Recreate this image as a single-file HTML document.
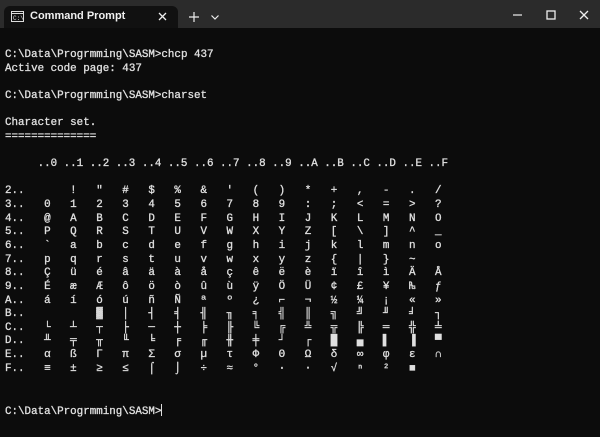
<!DOCTYPE html>
<html><head><meta charset="utf-8"><style>
html,body{margin:0;padding:0;width:600px;height:437px;overflow:hidden;background:#0c0c0c;}
.tb{position:absolute;left:0;top:0;width:600px;height:28px;background:#2b2b2b;}
.tab{position:absolute;left:4px;top:6px;width:174px;height:22px;background:#111111;border-radius:6px 6px 0 0;}
.tt{position:absolute;left:30px;top:10px;font:bold 11px "Liberation Sans",sans-serif;color:#f0f0f0;}
.term{position:absolute;left:5px;top:49px;font-family:"Liberation Mono","DejaVu Sans Mono",monospace;font-size:10.87px;line-height:13.65px;color:#e0e0e0;-webkit-text-stroke:0.3px #e0e0e0;}
.l{height:13.65px;white-space:pre;overflow:visible;}
.c{display:inline-block;width:26.07px;text-align:left;}
.lab{display:inline-block;width:39.1px;}
.cur{display:inline-block;width:1px;height:12px;background:#ddd;vertical-align:-2px;}
</style></head><body>
<div class="tb"></div>
<div class="tab"></div>
<svg style="position:absolute;left:11px;top:11px" width="13" height="11" viewBox="0 0 13 11"><rect x="0.5" y="0.5" width="12" height="10" fill="none" stroke="#ddd"/><line x1="0.5" y1="2.5" x2="12.5" y2="2.5" stroke="#ddd"/><text x="2" y="9" font-size="6" fill="#ddd" font-family="Liberation Mono">C:\</text></svg>
<div class="tt">Command Prompt</div>
<svg style="position:absolute;left:158px;top:12px" width="9" height="9"><path d="M1 1L8 8M8 1L1 8" stroke="#eee" stroke-width="1.3"/></svg>
<svg style="position:absolute;left:189px;top:12px" width="10" height="10"><path d="M5 0V10M0 5H10" stroke="#eee" stroke-width="1.2"/></svg>
<svg style="position:absolute;left:211px;top:15px" width="8" height="5"><path d="M0.5 0.5L4 4L7.5 0.5" stroke="#eee" fill="none" stroke-width="1.2"/></svg>
<svg style="position:absolute;left:513px;top:14px" width="9" height="2"><path d="M0 1H9" stroke="#eee" stroke-width="1.2"/></svg>
<svg style="position:absolute;left:546px;top:10px" width="10" height="10"><rect x="1" y="1" width="8" height="8" fill="none" stroke="#eee" stroke-width="1.3"/></svg>
<svg style="position:absolute;left:579px;top:10px" width="10" height="10"><path d="M1 1L9 9M9 1L1 9" stroke="#eee" stroke-width="1.3"/></svg>
<div class="term"><div class="l">C:\Data\Progrmming\SASM&gt;chcp 437</div><div class="l">Active code page: 437</div><div class="l"> </div><div class="l">C:\Data\Progrmming\SASM&gt;charset</div><div class="l"> </div><div class="l">Character set.</div><div class="l">==============</div><div class="l"> </div><div class="l"><span class="lab">     </span><span class="c" style="margin-left:-6.52px">..0</span><span class="c">..1</span><span class="c">..2</span><span class="c">..3</span><span class="c">..4</span><span class="c">..5</span><span class="c">..6</span><span class="c">..7</span><span class="c">..8</span><span class="c">..9</span><span class="c">..A</span><span class="c">..B</span><span class="c">..C</span><span class="c">..D</span><span class="c">..E</span><span class="c">..F</span></div><div class="l"> </div><div class="l"><span class="lab">2..</span><span class="c"> </span><span class="c">!</span><span class="c">"</span><span class="c">#</span><span class="c">$</span><span class="c">%</span><span class="c">&amp;</span><span class="c">'</span><span class="c">(</span><span class="c">)</span><span class="c">*</span><span class="c">+</span><span class="c">,</span><span class="c">-</span><span class="c">.</span><span class="c">/</span></div><div class="l"><span class="lab">3..</span><span class="c">0</span><span class="c">1</span><span class="c">2</span><span class="c">3</span><span class="c">4</span><span class="c">5</span><span class="c">6</span><span class="c">7</span><span class="c">8</span><span class="c">9</span><span class="c">:</span><span class="c">;</span><span class="c">&lt;</span><span class="c">=</span><span class="c">&gt;</span><span class="c">?</span></div><div class="l"><span class="lab">4..</span><span class="c">@</span><span class="c">A</span><span class="c">B</span><span class="c">C</span><span class="c">D</span><span class="c">E</span><span class="c">F</span><span class="c">G</span><span class="c">H</span><span class="c">I</span><span class="c">J</span><span class="c">K</span><span class="c">L</span><span class="c">M</span><span class="c">N</span><span class="c">O</span></div><div class="l"><span class="lab">5..</span><span class="c">P</span><span class="c">Q</span><span class="c">R</span><span class="c">S</span><span class="c">T</span><span class="c">U</span><span class="c">V</span><span class="c">W</span><span class="c">X</span><span class="c">Y</span><span class="c">Z</span><span class="c">[</span><span class="c">\</span><span class="c">]</span><span class="c">^</span><span class="c">_</span></div><div class="l"><span class="lab">6..</span><span class="c">`</span><span class="c">a</span><span class="c">b</span><span class="c">c</span><span class="c">d</span><span class="c">e</span><span class="c">f</span><span class="c">g</span><span class="c">h</span><span class="c">i</span><span class="c">j</span><span class="c">k</span><span class="c">l</span><span class="c">m</span><span class="c">n</span><span class="c">o</span></div><div class="l"><span class="lab">7..</span><span class="c">p</span><span class="c">q</span><span class="c">r</span><span class="c">s</span><span class="c">t</span><span class="c">u</span><span class="c">v</span><span class="c">w</span><span class="c">x</span><span class="c">y</span><span class="c">z</span><span class="c">{</span><span class="c">|</span><span class="c">}</span><span class="c">~</span><span class="c"> </span></div><div class="l"><span class="lab">8..</span><span class="c">Ç</span><span class="c">ü</span><span class="c">é</span><span class="c">â</span><span class="c">ä</span><span class="c">à</span><span class="c">å</span><span class="c">ç</span><span class="c">ê</span><span class="c">ë</span><span class="c">è</span><span class="c">ï</span><span class="c">î</span><span class="c">ì</span><span class="c">Ä</span><span class="c">Å</span></div><div class="l"><span class="lab">9..</span><span class="c">É</span><span class="c">æ</span><span class="c">Æ</span><span class="c">ô</span><span class="c">ö</span><span class="c">ò</span><span class="c">û</span><span class="c">ù</span><span class="c">ÿ</span><span class="c">Ö</span><span class="c">Ü</span><span class="c">¢</span><span class="c">£</span><span class="c">¥</span><span class="c">₧</span><span class="c">ƒ</span></div><div class="l"><span class="lab">A..</span><span class="c">á</span><span class="c">í</span><span class="c">ó</span><span class="c">ú</span><span class="c">ñ</span><span class="c">Ñ</span><span class="c">ª</span><span class="c">º</span><span class="c">¿</span><span class="c">⌐</span><span class="c">¬</span><span class="c">½</span><span class="c">¼</span><span class="c">¡</span><span class="c">«</span><span class="c">»</span></div><div class="l"><span class="lab">B..</span><span class="c"> </span><span class="c"> </span><span class="c">▓</span><span class="c">│</span><span class="c">┤</span><span class="c">╡</span><span class="c">╢</span><span class="c">╖</span><span class="c">╕</span><span class="c">╣</span><span class="c">║</span><span class="c">╗</span><span class="c">╝</span><span class="c">╜</span><span class="c">╛</span><span class="c">┐</span></div><div class="l"><span class="lab">C..</span><span class="c">└</span><span class="c">┴</span><span class="c">┬</span><span class="c">├</span><span class="c">─</span><span class="c">┼</span><span class="c">╞</span><span class="c">╟</span><span class="c">╚</span><span class="c">╔</span><span class="c">╩</span><span class="c">╦</span><span class="c">╠</span><span class="c">═</span><span class="c">╬</span><span class="c">╧</span></div><div class="l"><span class="lab">D..</span><span class="c">╨</span><span class="c">╤</span><span class="c">╥</span><span class="c">╙</span><span class="c">╘</span><span class="c">╒</span><span class="c">╓</span><span class="c">╫</span><span class="c">╪</span><span class="c">┘</span><span class="c">┌</span><span class="c">█</span><span class="c">▄</span><span class="c">▌</span><span class="c">▐</span><span class="c">▀</span></div><div class="l"><span class="lab">E..</span><span class="c">α</span><span class="c">ß</span><span class="c">Γ</span><span class="c">π</span><span class="c">Σ</span><span class="c">σ</span><span class="c">µ</span><span class="c">τ</span><span class="c">Φ</span><span class="c">Θ</span><span class="c">Ω</span><span class="c">δ</span><span class="c">∞</span><span class="c">φ</span><span class="c">ε</span><span class="c">∩</span></div><div class="l"><span class="lab">F..</span><span class="c">≡</span><span class="c">±</span><span class="c">≥</span><span class="c">≤</span><span class="c">⌠</span><span class="c">⌡</span><span class="c">÷</span><span class="c">≈</span><span class="c">°</span><span class="c">∙</span><span class="c">·</span><span class="c">√</span><span class="c">ⁿ</span><span class="c">²</span><span class="c">■</span><span class="c"> </span></div><div class="l"> </div><div class="l"> </div><div class="l">C:\Data\Progrmming\SASM&gt;<span class="cur"></span></div></div>
</body></html>
